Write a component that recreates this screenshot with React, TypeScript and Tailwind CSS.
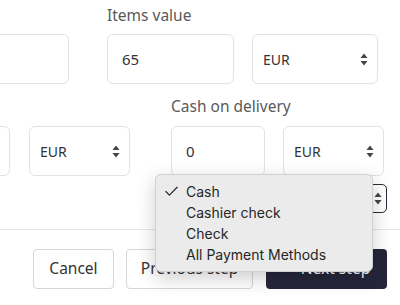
import { Check } from "lucide-react";

function SelectArrows() {
  return (
    <svg width="8" height="13" viewBox="0 0 8 13" className="shrink-0">
      <path d="M4 0.5 L7.5 5 H0.5 Z" fill="#444" />
      <path d="M4 12.5 L7.5 8 H0.5 Z" fill="#444" />
    </svg>
  );
}

function Input({ value, className }: { value?: string; className: string }) {
  return (
    <div
      className={`flex h-[50px] shrink-0 items-center rounded-md border border-[#dfe2ea] bg-white px-[14px] text-[15px] text-[#333] ${className}`}
    >
      {value}
    </div>
  );
}

function Select({ className }: { className: string }) {
  return (
    <div
      className={`flex h-[50px] shrink-0 items-center justify-between rounded-md border border-[#dfe2ea] bg-white pl-[10px] pr-[9px] text-[14px] text-[#333] ${className}`}
    >
      <span>EUR</span>
      <SelectArrows />
    </div>
  );
}

const items = ["Cash", "Cashier check", "Check", "All Payment Methods"];

export default function App() {
  return (
    <div
      className="relative h-[305px] w-[400px] overflow-hidden bg-white"
      style={{ fontFamily: '"Noto Sans", sans-serif' }}
    >
      <div className="pt-[5px]">
        <div className="ml-[107px] text-[15.5px] leading-[20px] text-[#5a5a5a]">Items value</div>
        <div className="mt-[9px] flex">
          <Input className="-ml-[60px] w-[129px]" />
          <Input value="65" className="ml-[38px] w-[127px]" />
          <Select className="ml-[18px] w-[126px]" />
        </div>
        <div className="ml-[171px] mt-[12px] text-[15.5px] leading-[20px] text-[#5a5a5a]">Cash on delivery</div>
        <div className="mt-[10px] flex">
          <Input className="-ml-[60px] w-[70px]" />
          <Select className="ml-[19px] w-[101px]" />
          <Input value="0" className="ml-[41px] w-[94px]" />
          <Select className="ml-[18px] w-[101px]" />
        </div>
        <div className="mt-[8px] flex justify-end pr-[13px]">
          <div className="flex h-[29px] w-[120px] items-center justify-end rounded-[5px] border-[1.5px] border-[#2b2b3a] bg-white pr-[4px]">
            <SelectArrows />
          </div>
        </div>
      </div>

      <div className="mt-[16px] border-t border-[#e6e6e6]" />

      <div className="mt-[19px] flex pl-[33px] text-[15.5px]">
        <button className="h-[40px] w-[81px] rounded-[4px] border border-[#d6d6d6] bg-white text-[#333]">
          Cancel
        </button>
        <button className="ml-[12px] h-[40px] w-[127px] rounded-[4px] border border-[#d6d6d6] bg-white text-[#333]">
          Previous step
        </button>
        <button className="ml-[13px] flex h-[40px] w-[121px] items-center justify-center gap-[8px] rounded-[4px] bg-[#25263a] text-white">
          <svg width="10" height="8" viewBox="0 0 10 8">
            <path d="M1 2 L5 6 L9 2" stroke="white" strokeWidth="1.6" fill="none" />
          </svg>
          Next step
        </button>
      </div>

      <div
        className="absolute left-[155px] top-[174px] w-[218px] rounded-[6px] border border-[#d0d0d0] bg-[#ebebeb] py-[6px] shadow-[0_6px_20px_rgba(0,0,0,0.2)]"
        style={{ fontFamily: "Inter, sans-serif" }}
      >
        {items.map((item, i) => (
          <div key={item} className="flex h-[21px] items-center text-[14px] text-[#262626]">
            <span className="flex w-[30px] justify-center pl-[1px]">
              {i === 0 && <Check size={17} strokeWidth={1.6} color="#222" />}
            </span>
            {item}
          </div>
        ))}
      </div>
    </div>
  );
}
